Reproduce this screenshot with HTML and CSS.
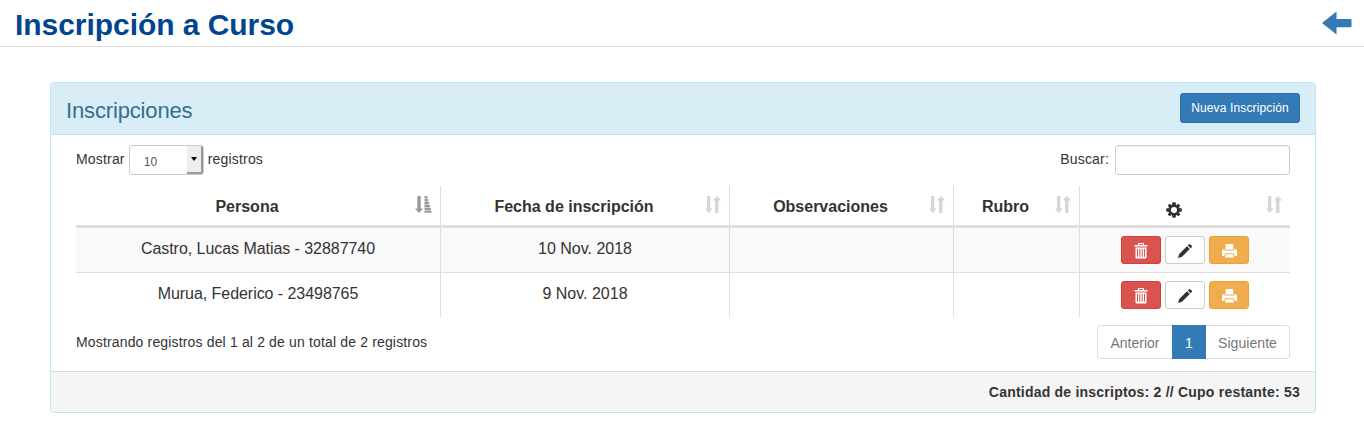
FILE: index.html
```html
<!DOCTYPE html>
<html lang="es">
<head>
<meta charset="utf-8">
<title>Inscripción a Curso</title>
<link rel="stylesheet" href="styles.css">
</head>
<body>
<svg class="sprite" aria-hidden="true">
  <symbol id="sort" viewBox="0 0 16 18"><path d="M2 0h3.300v12.500H7.500L3.800 17 0 12.500h2zM10 17h3.500V4.500H16L12 0 7.800 4.500H10z"/></symbol>
  <symbol id="sort-asc" viewBox="0 0 17 18"><path d="M2.300 0h3.400v12.500H8L4 17 0 12.500h2.300zM9.500 0h3v2.500h-3zM9.500 3h3.700v2.600H9.500zM9.500 6.100h4.600v2.500H9.500zM9.500 9.100h5.400v2.500H9.500zM9.500 12.100h6.300v2.200H9.500zM9.500 14.800h7v1.900h-7z"/></symbol>
  <symbol id="trash" viewBox="0 0 14 16"><path fill-rule="evenodd" d="M4 2V.8Q4 0 4.800 0h4.400Q10 0 10 .8V2h3.500v1.400H.5V2zM5.200 2h3.600V1.100H5.200zM1.500 4.500h11v10q0 1-1 1h-9q-1 0-1-1zM3 5.800v8h1v-8zM5.300 5.800v8h1v-8zM7.700 5.800v8h1v-8zM10 5.800v8h1v-8z"/></symbol>
  <symbol id="pencil" viewBox="0 0 14 14"><path d="M0 14l1.200-4L9 2.200 11.800 5 4 12.800zM9.800 1.400l1-1q.8-.8 1.600 0l1.200 1.200q.8.800 0 1.600l-1 1z"/></symbol>
  <symbol id="print" viewBox="0 0 15 14"><path fill-rule="evenodd" d="M4.300 0h6.200l.8 1v4.500H3.500V1zM0 7.500Q0 5 2 5h.5v1.500h10V5h.5q2 0 2 2.500V12h-2.200l-1-2.800H3.200l-1 2.800H0zM4 10.300h7l1.200 3.200H2.800z"/></symbol>
  <symbol id="gear" viewBox="-8 -8 16 16"><circle r="4.300" fill="none" stroke="currentColor" stroke-width="2.600"/><path d="M-1.500-7.800h3l.6 3h-4.200zM-1.500 7.800h3l.6-3h-4.200zM-7.800-1.500v3l3 .6v-4.200zM7.800-1.500v3l-3 .6v-4.200z"/><path transform="rotate(45)" d="M-1.300-7.500h2.600l.6 3h-3.800zM-1.300 7.500h2.600l.6-3h-3.800zM-7.500-1.300v2.600l3 .6v-3.800zM7.500-1.300v2.600l-3 .6v-3.800z"/></symbol>
</svg>

<header class="page-header">
  <h1>Inscripción a Curso</h1>
  <a class="back" aria-label="Volver"><svg viewBox="0 0 30 24"><path d="M0 12L14.500.4V8H28.500q1 0 1 1v6.200q0 1-1 1h-14V23.600z"/></svg></a>
</header>

<section class="panel">
  <div class="panel-heading">
    <h2>Inscripciones</h2>
    <button class="btn-new">Nueva Inscripción</button>
  </div>
  <div class="panel-body">
    <div class="controls">
      <div class="length">Mostrar <span class="select"><span class="value">10</span><span class="drop"><i class="caret"></i></span></span> registros</div>
      <label class="search">Buscar: <input type="text"></label>
    </div>
    <div class="table">
      <div class="row head">
        <div class="cell">Persona<svg class="sort active"><use href="#sort-asc"/></svg></div>
        <div class="cell">Fecha de inscripción<svg class="sort"><use href="#sort"/></svg></div>
        <div class="cell">Observaciones<svg class="sort"><use href="#sort"/></svg></div>
        <div class="cell">Rubro<svg class="sort"><use href="#sort"/></svg></div>
        <div class="cell"><svg class="gear"><use href="#gear"/></svg><svg class="sort"><use href="#sort"/></svg></div>
      </div>
      <div class="row odd">
        <div class="cell person">Castro, Lucas Matias - 32887740</div>
        <div class="cell">10 Nov. 2018</div>
        <div class="cell"></div>
        <div class="cell"></div>
        <div class="cell actions">
          <button class="btn danger"><svg class="i-trash"><use href="#trash"/></svg></button>
          <button class="btn plain"><svg class="i-pencil"><use href="#pencil"/></svg></button>
          <button class="btn warning"><svg class="i-print"><use href="#print"/></svg></button>
        </div>
      </div>
      <div class="row">
        <div class="cell person">Murua, Federico - 23498765</div>
        <div class="cell">9 Nov. 2018</div>
        <div class="cell"></div>
        <div class="cell"></div>
        <div class="cell actions">
          <button class="btn danger"><svg class="i-trash"><use href="#trash"/></svg></button>
          <button class="btn plain"><svg class="i-pencil"><use href="#pencil"/></svg></button>
          <button class="btn warning"><svg class="i-print"><use href="#print"/></svg></button>
        </div>
      </div>
    </div>
    <div class="summary">
      <span class="info">Mostrando registros del 1 al 2 de un total de 2 registros</span>
      <nav class="pages"><span class="prev">Anterior</span><span class="current">1</span><span class="next">Siguiente</span></nav>
    </div>
  </div>
  <footer class="panel-footer">Cantidad de inscriptos: 2 // Cupo restante: 53</footer>
</section>
</body>
</html>
```
FILE: styles.css
```css
* { box-sizing: border-box; }
body { margin: 0; background: #fff; color: #333; font: 14px/20px "Liberation Sans", Arial, sans-serif; }
h1, h2 { margin: 0; }
svg { display: block; fill: currentColor; }
button { margin: 0; font: inherit; }
.sprite { display: none; }

.page-header { height: 47px; padding: 0 12px 0 15px; display: flex; justify-content: space-between; border-bottom: 1px solid #e0e0e0; }
.page-header h1 { padding-top: 8px; color: #00458f; font-size: 30px; line-height: 33px; letter-spacing: -.05px; white-space: nowrap; }
.back { padding-top: 11px; color: #337ab7; }
.back svg { width: 30px; height: 24px; }

.panel { width: 1266px; height: 331px; margin: 35px 0 0 50px; border: 1px solid #bce8f1; border-radius: 4px; box-shadow: 0 1px 1px rgba(0, 0, 0, .05); overflow: hidden; }
.panel-heading { height: 52px; padding: 10px 15px 0; display: flex; align-items: flex-start; justify-content: space-between; background: #d9edf7; border-bottom: 1px solid #bce8f1; }
.panel-heading h2 { padding-top: 6px; color: #31708f; font-size: 22px; font-weight: 400; line-height: 24px; letter-spacing: -.15px; }
.btn-new { width: 120px; height: 30px; padding: 0; color: #fff; background: #337ab7; border: 1px solid #2e6da4; border-radius: 3px; font-size: 12px; line-height: 18px; letter-spacing: .13px; }

.panel-body { height: 236px; padding: 10px 25px 0; }
.controls { height: 41px; display: flex; justify-content: space-between; align-items: flex-start; }
.length, .search { display: flex; gap: 5px; height: 30px; line-height: 28px; letter-spacing: .18px; }
.search { gap: 6px; }
.length { gap: 4px; }
.select { display: flex; width: 75px; height: 30px; border: 1px solid #ccc; border-radius: 3px; overflow: hidden; }
.value { flex: 1; padding: 2px 0 0 14px; color: #555; font-size: 12px; }
.drop { width: 16px; display: flex; align-items: center; justify-content: center; background: #eee; border: solid #999; border-width: 0 2px 2px 0; }
.caret { border: solid transparent; border-width: 4px 3.5px 0; border-top-color: #000; }
.search input { width: 175px; height: 30px; margin: 0; border: 1px solid #ccc; border-radius: 3px; box-shadow: inset 0 1px 1px rgba(0, 0, 0, .075); }

.table { font-size: 16px; line-height: 23px; }
.row { display: grid; grid-template-columns: 365px 289px 224px 126px 210px; height: 44px; text-align: center; }
.cell { padding: 9px 8px 0; border-right: 1px solid #ddd; white-space: nowrap; }
.cell:last-child { border-right: 0; }
.person { letter-spacing: -.05px; }
.odd { height: 45px; background: #f9f9f9; border-bottom: 1px solid #ddd; }
.head { height: 42px; border-bottom: 3px solid #ddd; font-weight: 700; }
.head .cell { position: relative; padding: 9px 30px 0 8px; }
.sort { position: absolute; top: 10px; right: 8px; width: 16px; height: 18px; color: #d6d6d6; }
.sort.active { width: 17px; color: #999; }
.gear { width: 16px; height: 16px; margin: 7px auto 0; }
.actions { display: flex; justify-content: center; gap: 4px; padding-top: 8px; }
.btn { width: 40px; height: 28px; padding: 0; display: flex; align-items: center; justify-content: center; border: 1px solid; border-radius: 3px; }
.danger { color: #fff; background: #d9534f; border-color: #d43f3a; }
.plain { color: #333; background: #fff; border-color: #ccc; }
.warning { color: #fff; background: #f0ad4e; border-color: #eea236; }
.btn svg { margin-top: 2px; }
.i-trash { width: 14px; height: 16px; }
.i-pencil { width: 14px; height: 14px; }
.i-print { width: 15px; height: 14px; }

.summary { display: flex; justify-content: space-between; padding-top: 8px; }
.info { padding-top: 7px; letter-spacing: .155px; }
.pages { display: flex; height: 34px; line-height: 34px; text-align: center; color: #777; }
.prev { width: 75px; border: 1px solid #ddd; border-right: 0; border-radius: 4px 0 0 4px; }
.current { width: 34px; padding-top: 1px; color: #fff; background: #337ab7; }
.next { width: 84px; border: 1px solid #ddd; border-left: 0; border-radius: 0 4px 4px 0; letter-spacing: .06px; }
.panel-footer { height: 41px; padding: 10px 15px; background: #f5f5f5; border-top: 1px solid #ddd; text-align: right; font-weight: 700; letter-spacing: .22px; }
```
